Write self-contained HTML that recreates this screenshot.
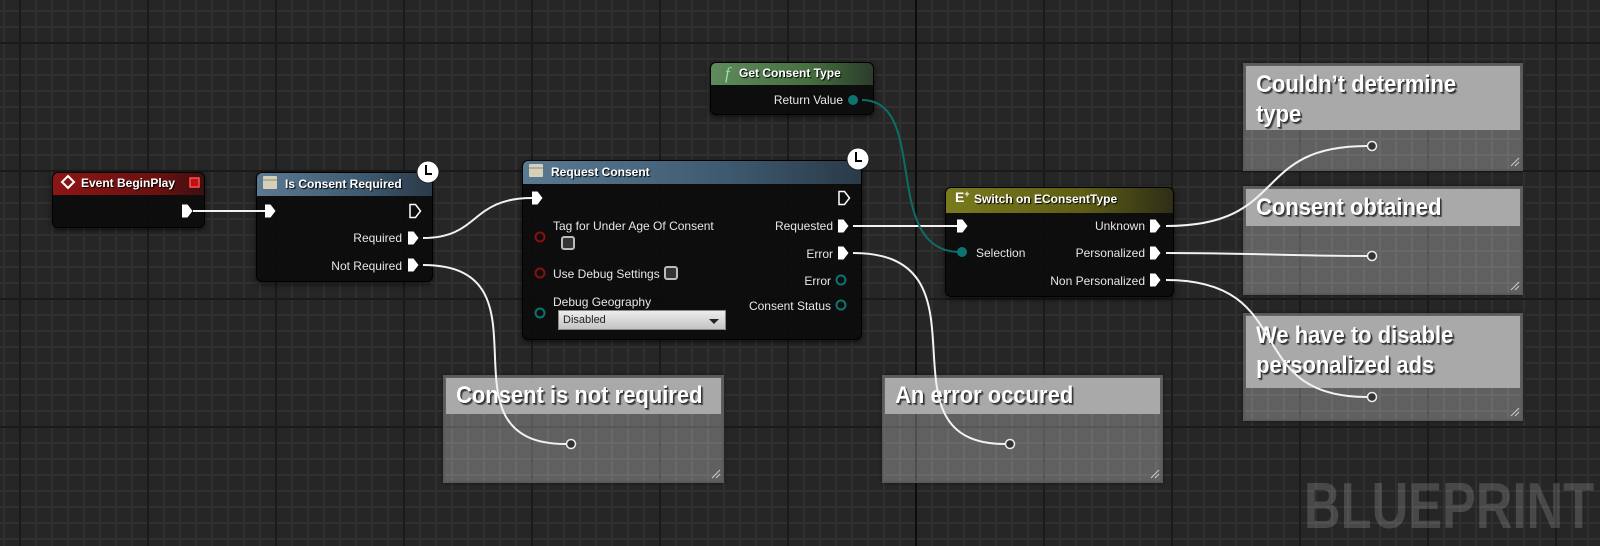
<!DOCTYPE html>
<html><head><meta charset="utf-8"><style>
*{margin:0;padding:0;box-sizing:border-box}
body{width:1600px;height:546px;overflow:hidden;background:#262626;font-family:"Liberation Sans",sans-serif;position:relative}
.grid{position:absolute;inset:0;
background-image:
linear-gradient(90deg,transparent 915px,#0c0c0c 915px,#0c0c0c 917px,transparent 917px),
linear-gradient(90deg,#1a1a1a 2px,transparent 2px),
linear-gradient(0deg,#1a1a1a 2px,transparent 2px),
linear-gradient(90deg,#303030 2px,transparent 2px),
linear-gradient(0deg,#303030 2px,transparent 2px);
background-size:1600px 546px,128px 128px,128px 128px,16px 16px,16px 16px;
background-position:0 0,19px 0,0 44px,3px 0,0 12px}
.node{position:absolute;background:rgba(12,12,12,.93);border:1px solid #000;border-radius:6px;box-shadow:0 2px 6px rgba(0,0,0,.6);color:#e4e4e4;font-size:12px}
.hdr{position:absolute;left:0;right:0;top:0;border-radius:5px 5px 0 0;font-weight:bold;color:#fff;font-size:12px;padding-left:28px;text-shadow:1px 1px 1px #000}
.t{position:absolute;font-size:12px;color:#e6e6e6;white-space:nowrap}
.r{text-align:right}
.cm{position:absolute;background:rgba(255,255,255,.27);border:2px solid #5a5a5a;box-shadow:0 0 3px rgba(0,0,0,.5)}
.cm .bar{position:absolute;left:1px;right:1px;top:1px;background:#a9a9a9;}
.cm .bar span{display:inline-block;transform-origin:0 0;transform:scaleX(.915);color:#fff;font-weight:bold;font-size:24px;line-height:30px;padding-left:11px;text-shadow:1px 1px 0 #333,2px 2px 1px #444;white-space:nowrap}
.wm{position:absolute;left:1304px;top:468px;font-weight:bold;font-size:65px;color:rgba(255,255,255,.16);transform:scaleX(.78);transform-origin:0 0;letter-spacing:0}
</style></head><body>
<div class="grid"></div>

<!-- comments -->
<div class="cm" style="left:443px;top:375px;width:281px;height:108px"><div class="bar" style="height:36px"><span style="padding-top:3px">Consent is not required</span></div></div>
<div class="cm" style="left:882px;top:375px;width:281px;height:108px"><div class="bar" style="height:36px"><span style="padding-top:3px">An error occured</span></div></div>
<div class="cm" style="left:1243px;top:63px;width:280px;height:108px"><div class="bar" style="height:64px"><span style="padding-top:4px">Couldn’t determine<br>type</span></div></div>
<div class="cm" style="left:1243px;top:186px;width:280px;height:109px"><div class="bar" style="height:37px"><span style="padding-top:4px">Consent obtained</span></div></div>
<div class="cm" style="left:1243px;top:313px;width:280px;height:108px"><div class="bar" style="height:72px"><span style="padding-top:5px">We have to disable<br>personalized ads</span></div></div>

<div class="wm">BLUEPRINT</div>

<!-- Event BeginPlay -->
<div class="node" style="left:52px;top:172px;width:153px;height:56px">
 <div class="hdr" style="height:22px;line-height:21px;background:linear-gradient(90deg,#8e1515,#6a1010 70%,#3a1010)">Event BeginPlay</div>
</div>
<!-- Is Consent Required -->
<div class="node" style="left:256px;top:172px;width:177px;height:110px">
 <div class="hdr" style="height:23px;line-height:22px;background:linear-gradient(90deg,#5a7a92,#3e5a70 60%,#2a3a48)">Is Consent Required</div>
 <div class="t r" style="right:30px;top:58px">Required</div>
 <div class="t r" style="right:30px;top:86px">Not Required</div>
</div>
<!-- Request Consent -->
<div class="node" style="left:522px;top:160px;width:340px;height:180px">
 <div class="hdr" style="height:23px;line-height:22px;background:linear-gradient(90deg,#5a7a92,#3e5a70 60%,#2a3a48)">Request Consent</div>
 <div class="t" style="left:30px;top:58px">Tag for Under Age Of Consent</div>
 <div style="position:absolute;left:38px;top:75px;width:14px;height:14px;border:2px solid #bbb;border-radius:3px;background:#333"></div>
 <div class="t" style="left:30px;top:106px">Use Debug Settings</div>
 <div style="position:absolute;left:141px;top:105px;width:14px;height:14px;border:2px solid #bbb;border-radius:3px;background:#333"></div>
 <div class="t" style="left:30px;top:134px">Debug Geography</div>
 <div style="position:absolute;left:35px;top:149px;width:168px;height:20px;background:linear-gradient(#ececec,#c4c4c4);border:1px solid #888;font-size:11px;color:#222;line-height:18px;padding-left:4px">Disabled<span style="position:absolute;right:6px;top:8px;border-left:5px solid transparent;border-right:5px solid transparent;border-top:5px solid #222"></span></div>
 <div class="t r" style="right:28px;top:58px">Requested</div>
 <div class="t r" style="right:28px;top:86px">Error</div>
 <div class="t r" style="right:30px;top:113px">Error</div>
 <div class="t r" style="right:30px;top:138px">Consent Status</div>
</div>
<!-- Get Consent Type -->
<div class="node" style="left:710px;top:62px;width:164px;height:53px">
 <div class="hdr" style="height:22px;line-height:21px;background:linear-gradient(90deg,#5e8a5e,#46703e 60%,#2c3c2c)">Get Consent Type</div>
 <div style="position:absolute;left:14px;top:1px;color:#9be29b;font-family:'Liberation Serif',serif;font-style:italic;font-size:17px">f</div>
 <div class="t r" style="right:30px;top:30px">Return Value</div>
</div>
<!-- Switch -->
<div class="node" style="left:945px;top:187px;width:229px;height:110px">
 <div class="hdr" style="height:25px;line-height:22px;background:linear-gradient(90deg,#7a7a1e,#5e5e14 60%,#2e2e18)">Switch on EConsentType</div>
 <div style="position:absolute;left:9px;top:1px;color:#fff;font-weight:bold;font-size:14px">E<span style="font-size:9px;vertical-align:top">+</span></div>
 <div class="t" style="left:30px;top:58px">Selection</div>
 <div class="t r" style="right:28px;top:31px">Unknown</div>
 <div class="t r" style="right:28px;top:58px">Personalized</div>
 <div class="t r" style="right:28px;top:86px">Non Personalized</div>
</div>

<svg width="1600" height="546" style="position:absolute;left:0;top:0" xmlns="http://www.w3.org/2000/svg">
<defs>
 <path id="ex" d="M0,-6.5 h5.5 l5,6.5 l-5,6.5 h-5.5 z"/>
</defs>
<g fill="none" stroke="#f2f2f2" stroke-width="2">
 <path d="M193,211 L265,211"/>
 <path d="M423,238 C480,238 470,198 532,198"/>
 <path d="M423,265 C560,265 430,444 566,444"/>
 <path d="M853,226 L960,226"/>
 <path d="M853,253 C1000,253 870,444 1005,444"/>
 <path d="M1166,226 C1290,226 1250,146 1367,146"/>
 <path d="M1166,253 C1250,253 1290,256 1367,256"/>
 <path d="M1166,280 C1300,280 1240,397 1367,397"/>
</g>
<path d="M862,100 C930,100 880,252 960,252" fill="none" stroke="#0d6e68" stroke-width="2"/>
<!-- exec pins -->
<g fill="#fff">
 <use href="#ex" x="182" y="211"/>
 <use href="#ex" x="265" y="211"/>
 <use href="#ex" x="408" y="238"/>
 <use href="#ex" x="408" y="265"/>
 <use href="#ex" x="532" y="198"/>
 <use href="#ex" x="838" y="226"/>
 <use href="#ex" x="838" y="253"/>
 <use href="#ex" x="957" y="226"/>
 <use href="#ex" x="1150" y="226"/>
 <use href="#ex" x="1150" y="253"/>
 <use href="#ex" x="1150" y="280"/>
</g>
<g fill="none" stroke="#fff" stroke-width="1.5">
 <use href="#ex" x="410" y="211"/>
 <use href="#ex" x="839" y="198"/>
</g>
<!-- data pins -->
<g stroke-width="2" fill="none">
 <circle cx="540" cy="237" r="4.5" stroke="#8a1010"/>
 <circle cx="540" cy="273" r="4.5" stroke="#8a1010"/>
 <circle cx="540" cy="313" r="4.5" stroke="#0e7470"/>
 <circle cx="841" cy="280" r="4.5" stroke="#0e7470"/>
 <circle cx="841" cy="305" r="4.5" stroke="#0e7470"/>
</g>
<circle cx="853" cy="100" r="5" fill="#0e7470"/>
<circle cx="962" cy="252" r="5" fill="#0e7470"/>
<!-- reroute pins -->
<g fill="#333" stroke="#eee" stroke-width="1.5">
 <circle cx="571" cy="444" r="4.5"/><circle cx="1010" cy="444" r="4.5"/>
 <circle cx="1372" cy="146" r="4.5"/><circle cx="1372" cy="256" r="4.5"/><circle cx="1372" cy="397" r="4.5"/>
</g>
<!-- event icons -->
<rect x="190" y="178" width="9" height="9" fill="#c01010" stroke="#ff5050" stroke-width="1.5"/>
<path d="M68,176 l6,6 l-6,6 l-6,-6 z" fill="none" stroke="#fff" stroke-width="2"/>
<g fill="#d6d0b8"><rect x="263" y="176" width="14" height="13" rx="1"/><rect x="529" y="164" width="14" height="13" rx="1"/></g>
<g stroke="#888" stroke-width="1"><line x1="263" y1="180" x2="277" y2="180"/><line x1="529" y1="168" x2="543" y2="168"/></g>
<!-- clocks -->
<g><circle cx="428" cy="172" r="11" fill="#fff" stroke="#222" stroke-width="1"/><path d="M426,165 v9 h6" fill="none" stroke="#000" stroke-width="2"/>
<circle cx="858" cy="159" r="11" fill="#fff" stroke="#222" stroke-width="1"/><path d="M856,152 v9 h6" fill="none" stroke="#000" stroke-width="2"/></g>
<!-- resize grips -->
<g stroke="#ccc" stroke-width="1">
 <path d="M712,478 l8,-8 M716,478 l4,-4"/><path d="M1151,478 l8,-8 M1155,478 l4,-4"/>
 <path d="M1511,166 l8,-8 M1515,166 l4,-4"/><path d="M1511,290 l8,-8 M1515,290 l4,-4"/><path d="M1511,416 l8,-8 M1515,416 l4,-4"/>
</g>
</svg>
</body></html>
